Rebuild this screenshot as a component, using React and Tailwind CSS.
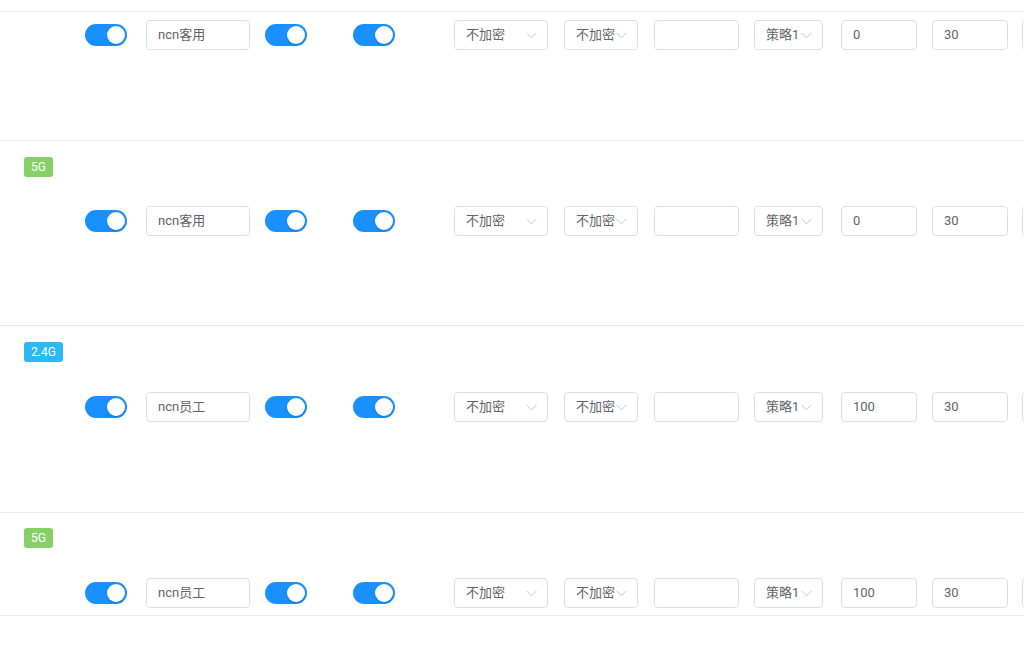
import React from 'react';

const font = { fontFamily: 'Roboto, "Noto Sans CJK SC", sans-serif' };

const Toggle = ({ className = '' }) => (
    <div className={`relative w-[42px] h-[22px] rounded-full bg-[#1890ff] shrink-0 ${className}`}>
        <div className="absolute right-[2px] top-[2px] w-[18px] h-[18px] rounded-full bg-white shadow-[0_1px_2px_rgba(0,0,0,0.2)]" />
    </div>
);

const Chevron = () => (
    <svg width="11" height="7" viewBox="0 0 11 7" className="shrink-0">
        <polyline points="0.5,0.8 5.5,5.8 10.5,0.8" fill="none" stroke="#c0c4cc" strokeWidth="1" />
    </svg>
);

const Input = ({ value, w, className = '' }) => (
    <div className={`h-[30px] ${w} shrink-0 border border-[#dcdee2] rounded-[4px] bg-white flex items-center pl-[11px] text-[13px] text-[#5f6369] ${className}`}>
        {value}
    </div>
);

const Select = ({ value, w, className = '' }) => (
    <div className={`h-[30px] ${w} shrink-0 border border-[#dcdee2] rounded-[4px] bg-white flex items-center justify-between pl-[11px] pr-[10px] text-[13px] text-[#5f6369] ${className}`}>
        <span>{value}</span>
        <Chevron />
    </div>
);

const Badge = ({ label, color }) => (
    <span className={`inline-flex items-center h-[20px] px-[7px] rounded-[3px] text-[12px] text-white ${color}`}>{label}</span>
);

const Controls = ({ name, rate }) => (
    <div className="flex items-center h-[30px] pl-[85px]">
        <Toggle />
        <Input value={name} w="w-[104px]" className="ml-[19px]" />
        <Toggle className="ml-[15px]" />
        <Toggle className="ml-[46px]" />
        <Select value="不加密" w="w-[94px]" className="ml-[59px]" />
        <Select value="不加密" w="w-[74px]" className="ml-[16px]" />
        <Input value="" w="w-[85px]" className="ml-[16px]" />
        <Select value="策略1" w="w-[69px]" className="ml-[15px]" />
        <Input value={rate} w="w-[76px]" className="ml-[18px]" />
        <Input value="30" w="w-[76px]" className="ml-[15px]" />
        <Input value="" w="w-[76px]" className="ml-[14px]" />
    </div>
);

export default function App() {
    return (
        <div className="w-[1024px] h-[653px] overflow-hidden bg-white" style={font}>
            <div className="h-[11px] border-b border-[#f0f0f0] box-content" />
            <div className="pt-[8px] pb-[90px] border-b border-[#e8eaec]">
                <Controls name="ncn客用" rate="0" />
            </div>
            <div className="pt-[16px] pb-[89px] border-b border-[#e8eaec]">
                <div className="pl-[24px] flex"><Badge label="5G" color="bg-[#87d068]" /></div>
                <div className="mt-[29px]"><Controls name="ncn客用" rate="0" /></div>
            </div>
            <div className="pt-[16px] pb-[90px] border-b border-[#e8eaec]">
                <div className="pl-[24px] flex"><Badge label="2.4G" color="bg-[#2db7f5]" /></div>
                <div className="mt-[30px]"><Controls name="ncn员工" rate="100" /></div>
            </div>
            <div className="pt-[15px] pb-[7px] border-b border-[#e8eaec]">
                <div className="pl-[24px] flex"><Badge label="5G" color="bg-[#87d068]" /></div>
                <div className="mt-[30px]"><Controls name="ncn员工" rate="100" /></div>
            </div>
        </div>
    );
}
